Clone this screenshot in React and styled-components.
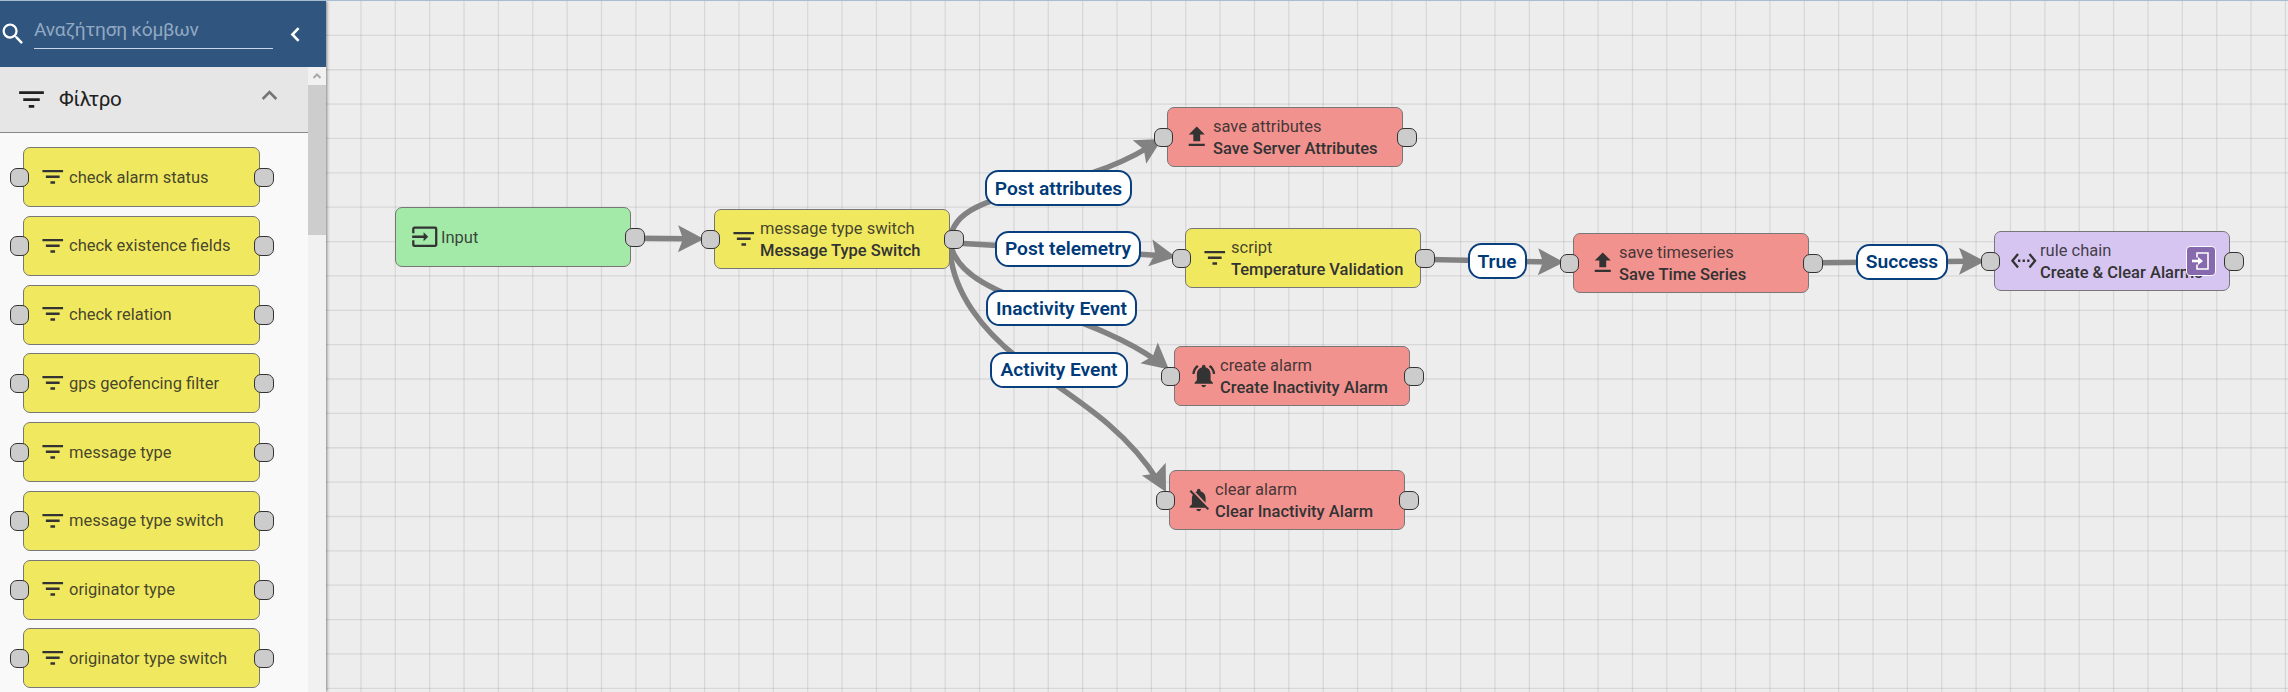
import React from 'react';
import styled, { createGlobalStyle } from 'styled-components';
import {
  MdFilterList, MdSearch, MdExpandLess, MdInput,
  MdNotificationsActive, MdNotificationsOff, MdSettingsEthernet,
} from 'react-icons/md';

const GlobalStyle = createGlobalStyle`
  * { box-sizing: border-box; }
  body { margin: 0; font-family: Roboto, "Noto Sans", sans-serif; background: #eee; overflow: hidden; }
`;

const Page = styled.div`
  display: flex;
  width: 2288px;
  height: 692px;
  overflow: hidden;
  background: #ededed;
  border-top: 1px solid #a9bdd2;
`;

const Sidebar = styled.aside`
  position: relative;
  z-index: 2;
  display: flex;
  flex-direction: column;
  flex: none;
  width: 326px;
  background: #f9f9f9;
  box-shadow: 1px 0 3px rgba(0, 0, 0, 0.45);
`;

const SearchBar = styled.div`
  display: flex;
  align-items: center;
  height: 66px;
  flex: none;
  background: #30567f;
  color: #fff;
  svg { flex: none; }
`;

const SearchIcon = styled(MdSearch)`
  width: 28px;
  height: 28px;
  margin-left: -1px;
`;

const SearchField = styled.div`
  width: 239px;
  height: 31px;
  margin: 0 0 2px 7px;
  border-bottom: 1px solid #c9d5e6;
  color: #92a8c2;
  font-size: 19.2px;
  letter-spacing: -0.28px;
  line-height: 24px;
  white-space: nowrap;
`;

const CollapseIcon = styled.svg`
  width: 10px;
  height: 15px;
  margin-left: 17px;
`;

const Library = styled.div`
  display: flex;
  flex: 1;
  min-height: 0;
`;

const Category = styled.section`
  width: 308px;
  overflow: hidden;
`;

const CategoryHeader = styled.header`
  display: flex;
  align-items: center;
  height: 66px;
  padding-left: 15px;
  background: #e6e6e6;
  border-bottom: 1px solid #888;
  color: #212121;
  font-size: 20.6px;
`;

const CategoryTitle = styled.span`
  flex: 1;
  margin: 0 0 2px 11px;
  letter-spacing: -0.4px;
`;

const CategoryChevron = styled(MdExpandLess)`
  width: 31px;
  height: 31px;
  margin: 0 23px 9px 0;
  color: #757575;
`;

const TypeList = styled.div`
  display: flex;
  flex-direction: column;
  gap: 8.75px;
  padding: 14px 0 0 23px;
`;

const Scrollbar = styled.div`
  width: 18px;
  background: #f1f1f1;
`;

const ScrollButton = styled.div`
  display: flex;
  align-items: center;
  justify-content: center;
  height: 18px;
`;

const ScrollThumb = styled.div`
  height: 150px;
  background: #cdcdcd;
`;

const tones = { yellow: '#f0e85f', green: '#a3eaa9', red: '#f1928f', purple: '#d6c4f1' };

const NodeCard = styled.div`
  position: relative;
  display: flex;
  align-items: center;
  flex: none;
  width: ${(p) => p.$width}px;
  height: 60px;
  padding: 0 0 0 14.5px;
  border: 1px solid #777;
  border-radius: 7px;
  background: ${(p) => tones[p.$tone]};
  color: #333;
`;

const NodeIcon = styled.span`
  display: flex;
  flex: none;
  margin: 0 3px 1px 0;
  svg { width: 27.5px; height: 27.5px; }
`;

const NodeText = styled.div`
  display: flex;
  flex-direction: column;
  padding-top: 1px;
  font-size: 16.5px;
  line-height: 21.8px;
  white-space: nowrap;
`;

const TypeName = styled.span`
  color: rgba(35, 35, 35, 0.84);
`;

const NodeTitle = styled.span`
  font-weight: 500;
`;

const Connector = styled.span`
  position: absolute;
  top: 19.5px;
  ${(p) => (p.$side === 'left' ? 'left: -14.5px;' : 'right: -15px;')}
  width: 19.5px;
  height: 19.5px;
  border: 1px solid #333;
  border-radius: 7px;
  background: #ccc;
`;

const OpenButton = styled.span`
  position: absolute;
  top: 14px;
  right: 13px;
  display: flex;
  align-items: center;
  justify-content: center;
  width: 30px;
  height: 30px;
  border: 1px solid #fff;
  border-radius: 4px;
  background: #8769ae;
`;

const Canvas = styled.main`
  position: relative;
  flex: 1;
  overflow: hidden;
`;

const Drawing = styled.svg`
  position: absolute;
  left: -326px;
  top: -1px;
`;

const Placed = styled.div`
  position: absolute;
  left: ${(p) => p.$x - 326}px;
  top: ${(p) => p.$y - 1}px;
`;

const EdgeLabel = styled.div`
  display: flex;
  align-items: center;
  justify-content: center;
  width: ${(p) => p.$w}px;
  height: 36px;
  border: 2px solid #0a3f7d;
  border-radius: 13.5px;
  background: #fff;
  color: #003a79;
  font-size: 19.2px;
  font-weight: 600;
  white-space: nowrap;
`;

const UploadIcon = () => (
  <svg viewBox="0 0 24 24" fill="currentColor">
    <path d="M9 16h6v-6h4l-7-7-7 7h4zm-4 2h14v2H5z" />
  </svg>
);

const icons = {
  filter: MdFilterList,
  upload: UploadIcon,
  input: MdInput,
  alarm: MdNotificationsActive,
  alarmOff: MdNotificationsOff,
  chain: MdSettingsEthernet,
};

function RuleNode({ width = 235.7, tone = 'yellow', icon = 'filter', type, title, input = true, output = true, openable }) {
  const Icon = icons[icon];
  return (
    <NodeCard $tone={tone} $width={width}>
      <NodeIcon><Icon /></NodeIcon>
      <NodeText>
        <TypeName>{type}</TypeName>
        {title && <NodeTitle>{title}</NodeTitle>}
      </NodeText>
      {input && <Connector $side="left" />}
      {output && <Connector $side="right" />}
      {openable && (
        <OpenButton>
          <svg width="20" height="20" viewBox="0 0 20 20" fill="none" stroke="#fff" strokeWidth="1.6">
            <path d="M6 6.5V2h11v16H6v-4.5" />
            <path d="M1 10h7" strokeWidth="2.6" />
            <path d="M7 6l5 4-5 4z" fill="#fff" stroke="none" />
          </svg>
        </OpenButton>
      )}
    </NodeCard>
  );
}

const nodeTypes = [
  'check alarm status', 'check existence fields', 'check relation', 'gps geofencing filter',
  'message type', 'message type switch', 'originator type', 'originator type switch',
];

const nodes = [
  { x: 395, y: 207.4, tone: 'green', icon: 'input', type: 'Input', input: false },
  { x: 714, y: 209, type: 'message type switch', title: 'Message Type Switch' },
  { x: 1167, y: 107, tone: 'red', icon: 'upload', type: 'save attributes', title: 'Save Server Attributes' },
  { x: 1185, y: 228, type: 'script', title: 'Temperature Validation' },
  { x: 1174, y: 346, tone: 'red', icon: 'alarm', type: 'create alarm', title: 'Create Inactivity Alarm' },
  { x: 1169, y: 470, tone: 'red', icon: 'alarmOff', type: 'clear alarm', title: 'Clear Inactivity Alarm' },
  { x: 1573, y: 233.4, tone: 'red', icon: 'upload', type: 'save timeseries', title: 'Save Time Series' },
  { x: 1994, y: 231, tone: 'purple', icon: 'chain', type: 'rule chain', title: 'Create & Clear Alarms', openable: true },
];

const labels = [
  { x: 985, y: 170, w: 147, text: 'Post attributes' },
  { x: 995, y: 230.5, w: 146, text: 'Post telemetry' },
  { x: 986, y: 290, w: 151, text: 'Inactivity Event' },
  { x: 990, y: 351.5, w: 138, text: 'Activity Event' },
  { x: 1467.5, y: 243, w: 59, text: 'True' },
  { x: 1856, y: 243.5, w: 92, text: 'Success' },
];

const edges = [
  { d: 'M640 238.2L690 238.7', tip: [704, 239], angle: 0.5 },
  { d: 'M950 240C955 186 1062 200 1149 147', tip: [1162, 139], angle: -30 },
  { d: 'M955 243L1160 255.5', tip: [1176, 257], angle: 9 },
  { d: 'M950 240C955 300 1080 306 1157 361', tip: [1169, 369.5], angle: 40 },
  { d: 'M950 240C948 290 985 335 1030 367C1075 399 1125 428 1158 481', tip: [1166, 492], angle: 62 },
  { d: 'M1430 259.5L1550 262', tip: [1564, 262.3], angle: 1 },
  { d: 'M1818 262.7L1970 261.3', tip: [1985, 261.3], angle: 0 },
];

const STEP = 34.365;
const columns = Array.from({ length: 57 }, (_, i) => 326.6 + (i + 1) * STEP);
const rows = Array.from({ length: 20 }, (_, i) => 1 + (i + 1) * STEP);

export default function App() {
  return (
    <>
      <GlobalStyle />
      <Page>
        <Sidebar>
          <SearchBar>
            <SearchIcon />
            <SearchField>Αναζήτηση κόμβων</SearchField>
            <CollapseIcon viewBox="0 0 10 15" fill="none" stroke="#fff" strokeWidth="2.6">
              <path d="M8.6 1.2L2.4 7.5L8.6 13.8" />
            </CollapseIcon>
          </SearchBar>
          <Library>
            <Category>
              <CategoryHeader>
                <MdFilterList size={33} />
                <CategoryTitle>Φίλτρο</CategoryTitle>
                <CategoryChevron />
              </CategoryHeader>
              <TypeList>
                {nodeTypes.map((t) => <RuleNode key={t} type={t} width={236.5} />)}
              </TypeList>
            </Category>
            <Scrollbar>
              <ScrollButton>
                <svg width="8" height="6" viewBox="0 0 8 6" fill="none" stroke="#aaa" strokeWidth="2">
                  <path d="M0.5 5L4 1.5L7.5 5" />
                </svg>
              </ScrollButton>
              <ScrollThumb />
            </Scrollbar>
          </Library>
        </Sidebar>
        <Canvas>
          <Drawing width="2288" height="692">
            <g stroke="#000" strokeOpacity="0.085" strokeWidth="1.3">
              {columns.map((x) => <path key={x} d={`M${x} 0V692`} />)}
              {rows.map((y) => <path key={y} d={`M326 ${y}H2288`} />)}
            </g>
            {edges.map((e) => (
              <g key={e.d}>
                <path d={e.d} fill="none" stroke="#828282" strokeWidth="5.5" />
                <path
                  d="M0 0L-26 -13.5L-21 0L-26 13.5Z"
                  fill="#828282"
                  transform={`translate(${e.tip[0]} ${e.tip[1]}) rotate(${e.angle})`}
                />
              </g>
            ))}
          </Drawing>
          {nodes.map(({ x, y, ...node }) => (
            <Placed key={node.type} $x={x} $y={y}><RuleNode {...node} /></Placed>
          ))}
          {labels.map((l) => (
            <Placed key={l.text} $x={l.x} $y={l.y}><EdgeLabel $w={l.w}>{l.text}</EdgeLabel></Placed>
          ))}
        </Canvas>
      </Page>
    </>
  );
}
